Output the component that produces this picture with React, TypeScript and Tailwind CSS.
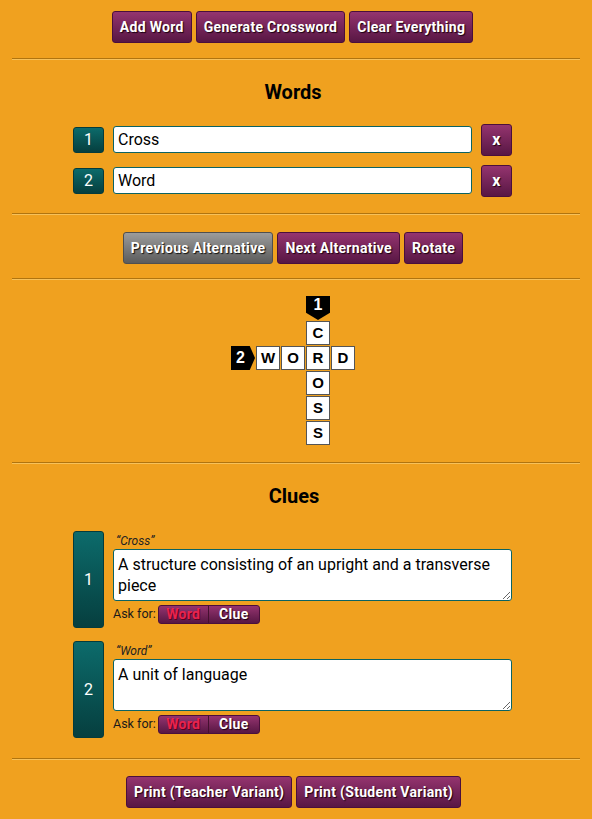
import type React from "react";

const btn =
  "h-[32px] px-[7px] rounded-[3px] border border-[#4a0f3c] bg-linear-to-b from-[#95346f] to-[#581744] text-white font-bold text-[14px] tracking-[0.3px] [text-shadow:1px_1px_1px_#1a0010]";

const grayBtn =
  "h-[32px] px-[7px] rounded-[3px] border border-[#4f4f4f] bg-linear-to-b from-[#9c9c9c] to-[#5c5c5c] text-white font-bold text-[14px] tracking-[0.35px] [text-shadow:1px_1px_1px_#111]";

const teal = "rounded-[3px] border border-[#053b3b] bg-linear-to-b from-[#0c6b6b] to-[#063f3f] text-white";

function Rule({ className = "" }: { className?: string }) {
  return <div className={"mx-[12px] h-[2px] border-t border-[#b0740f] border-b border-b-[#f7c15a] " + className} />;
}

function WordRow({ n, value }: { n: number; value: string }) {
  return (
    <div className="flex items-center justify-center gap-[9px] h-[27px] pr-[7px]">
      <div className={teal + " w-[31px] h-[26px] flex items-center justify-center text-[16px]"}>{n}</div>
      <input
        defaultValue={value}
        className="w-[359px] h-[27px] rounded-[3px] border border-[#0b6363] bg-white px-[4px] text-[16px] text-black outline-none"
      />
      <button className={btn + " w-[31px] h-[27px] px-0 text-[16px]"}>x</button>
    </div>
  );
}

function Cell({ ch, pos }: { ch: string; pos: string }) {
  return (
    <div
      className={
        "w-[24px] h-[24px] bg-white border border-[#555] flex items-center justify-center font-bold text-[15px] text-black font-['Liberation_Sans',sans-serif] " +
        pos
      }
    >
      {ch}
    </div>
  );
}

function Crossword() {
  return (
    <div className="flex justify-center pr-[6px]">
      <div className="grid grid-cols-[repeat(5,24px)] grid-rows-[repeat(6,24px)] gap-[1px]">
        <div className="col-start-4 row-start-1 bg-black text-white font-bold text-[16px] flex justify-center pt-[1px] leading-[16px] font-['Liberation_Sans',sans-serif] [clip-path:polygon(0_0,100%_0,100%_70%,50%_100%,0_70%)]">
          1
        </div>
        <Cell ch="C" pos="col-start-4 row-start-2" />
        <div className="col-start-1 row-start-3 bg-black text-white font-bold text-[16px] flex items-center pl-[5px] font-['Liberation_Sans',sans-serif] [clip-path:polygon(0_0,78%_0,100%_50%,78%_100%,0_100%)]">
          2
        </div>
        <Cell ch="W" pos="col-start-2 row-start-3" />
        <Cell ch="O" pos="col-start-3 row-start-3" />
        <Cell ch="R" pos="col-start-4 row-start-3" />
        <Cell ch="D" pos="col-start-5 row-start-3" />
        <Cell ch="O" pos="col-start-4 row-start-4" />
        <Cell ch="S" pos="col-start-4 row-start-5" />
        <Cell ch="S" pos="col-start-4 row-start-6" />
      </div>
    </div>
  );
}

function ClueRow({ n, word, clue }: { n: number; word: string; clue: string }) {
  return (
    <div className="flex justify-center gap-[9px] h-[97px] pr-[7px]">
      <div className={teal + " w-[31px] h-[97px] flex items-center justify-center text-[16px]"}>{n}</div>
      <div className="w-[399px] flex flex-col pt-[2px]">
        <div className="h-[16px] pl-[3px] text-[12px] italic text-[#222] leading-[16px]">“{word}”</div>
        <textarea
          defaultValue={clue}
          className="h-[52px] w-full rounded-[3px] border border-[#0b6363] bg-white px-[4px] py-[4px] text-[16px] leading-[21px] text-black outline-none resize-y"
        />
        <div className="mt-[4px] flex items-center gap-[2px] h-[19px]">
          <span className="text-[12.5px] text-[#1a1a1a]">Ask for:</span>
          <div className="flex h-[19px] rounded-[3px] border border-[#4a0f3c] bg-linear-to-b from-[#95346f] to-[#581744] overflow-hidden font-bold text-[14px] tracking-[0.3px]">
            <span className="w-[50px] flex items-center justify-center text-[#e8234e] [text-shadow:1px_1px_0_#5a0020] border-r border-[#45102f]">
              Word
            </span>
            <span className="w-[50px] flex items-center justify-center text-white [text-shadow:1px_1px_1px_#1a0010]">
              Clue
            </span>
          </div>
        </div>
      </div>
    </div>
  );
}

export default function App(): React.ReactElement {
  return (
    <div className="w-[592px] min-h-[819px] bg-[#f0a11f] font-['Roboto',sans-serif] flex flex-col pt-[11px]">
      <div className="flex justify-center gap-[4px] pr-[7px]">
        <button className={btn}>Add Word</button>
        <button className={btn}>Generate Crossword</button>
        <button className={btn}>Clear Everything</button>
      </div>
      <Rule className="mt-[15px]" />

      <h2 className="mt-[20px] h-[24px] pr-[6px] text-center text-[20px] leading-[24px] font-bold text-black">Words</h2>
      <div className="mt-[22px] flex flex-col gap-[14px]">
        <WordRow n={1} value="Cross" />
        <WordRow n={2} value="Word" />
      </div>
      <Rule className="mt-[19px]" />

      <div className="mt-[17px] flex justify-center gap-[4px] pr-[6px]">
        <button className={grayBtn}>Previous Alternative</button>
        <button className={btn}>Next Alternative</button>
        <button className={btn}>Rotate</button>
      </div>
      <Rule className="mt-[14px]" />

      <div className="mt-[16px]">
        <Crossword />
      </div>
      <Rule className="mt-[17px]" />

      <h2 className="mt-[20px] h-[24px] pr-[4px] text-center text-[20px] leading-[24px] font-bold text-black">Clues</h2>
      <div className="mt-[23px] flex flex-col gap-[13px]">
        <ClueRow n={1} word="Cross" clue="A structure consisting of an upright and a transverse piece" />
        <ClueRow n={2} word="Word" clue="A unit of language" />
      </div>
      <Rule className="mt-[20px]" />

      <div className="mt-[16px] mb-[11px] flex justify-center gap-[4px] pr-[5px]">
        <button className={btn}>Print (Teacher Variant)</button>
        <button className={btn}>Print (Student Variant)</button>
      </div>
    </div>
  );
}
